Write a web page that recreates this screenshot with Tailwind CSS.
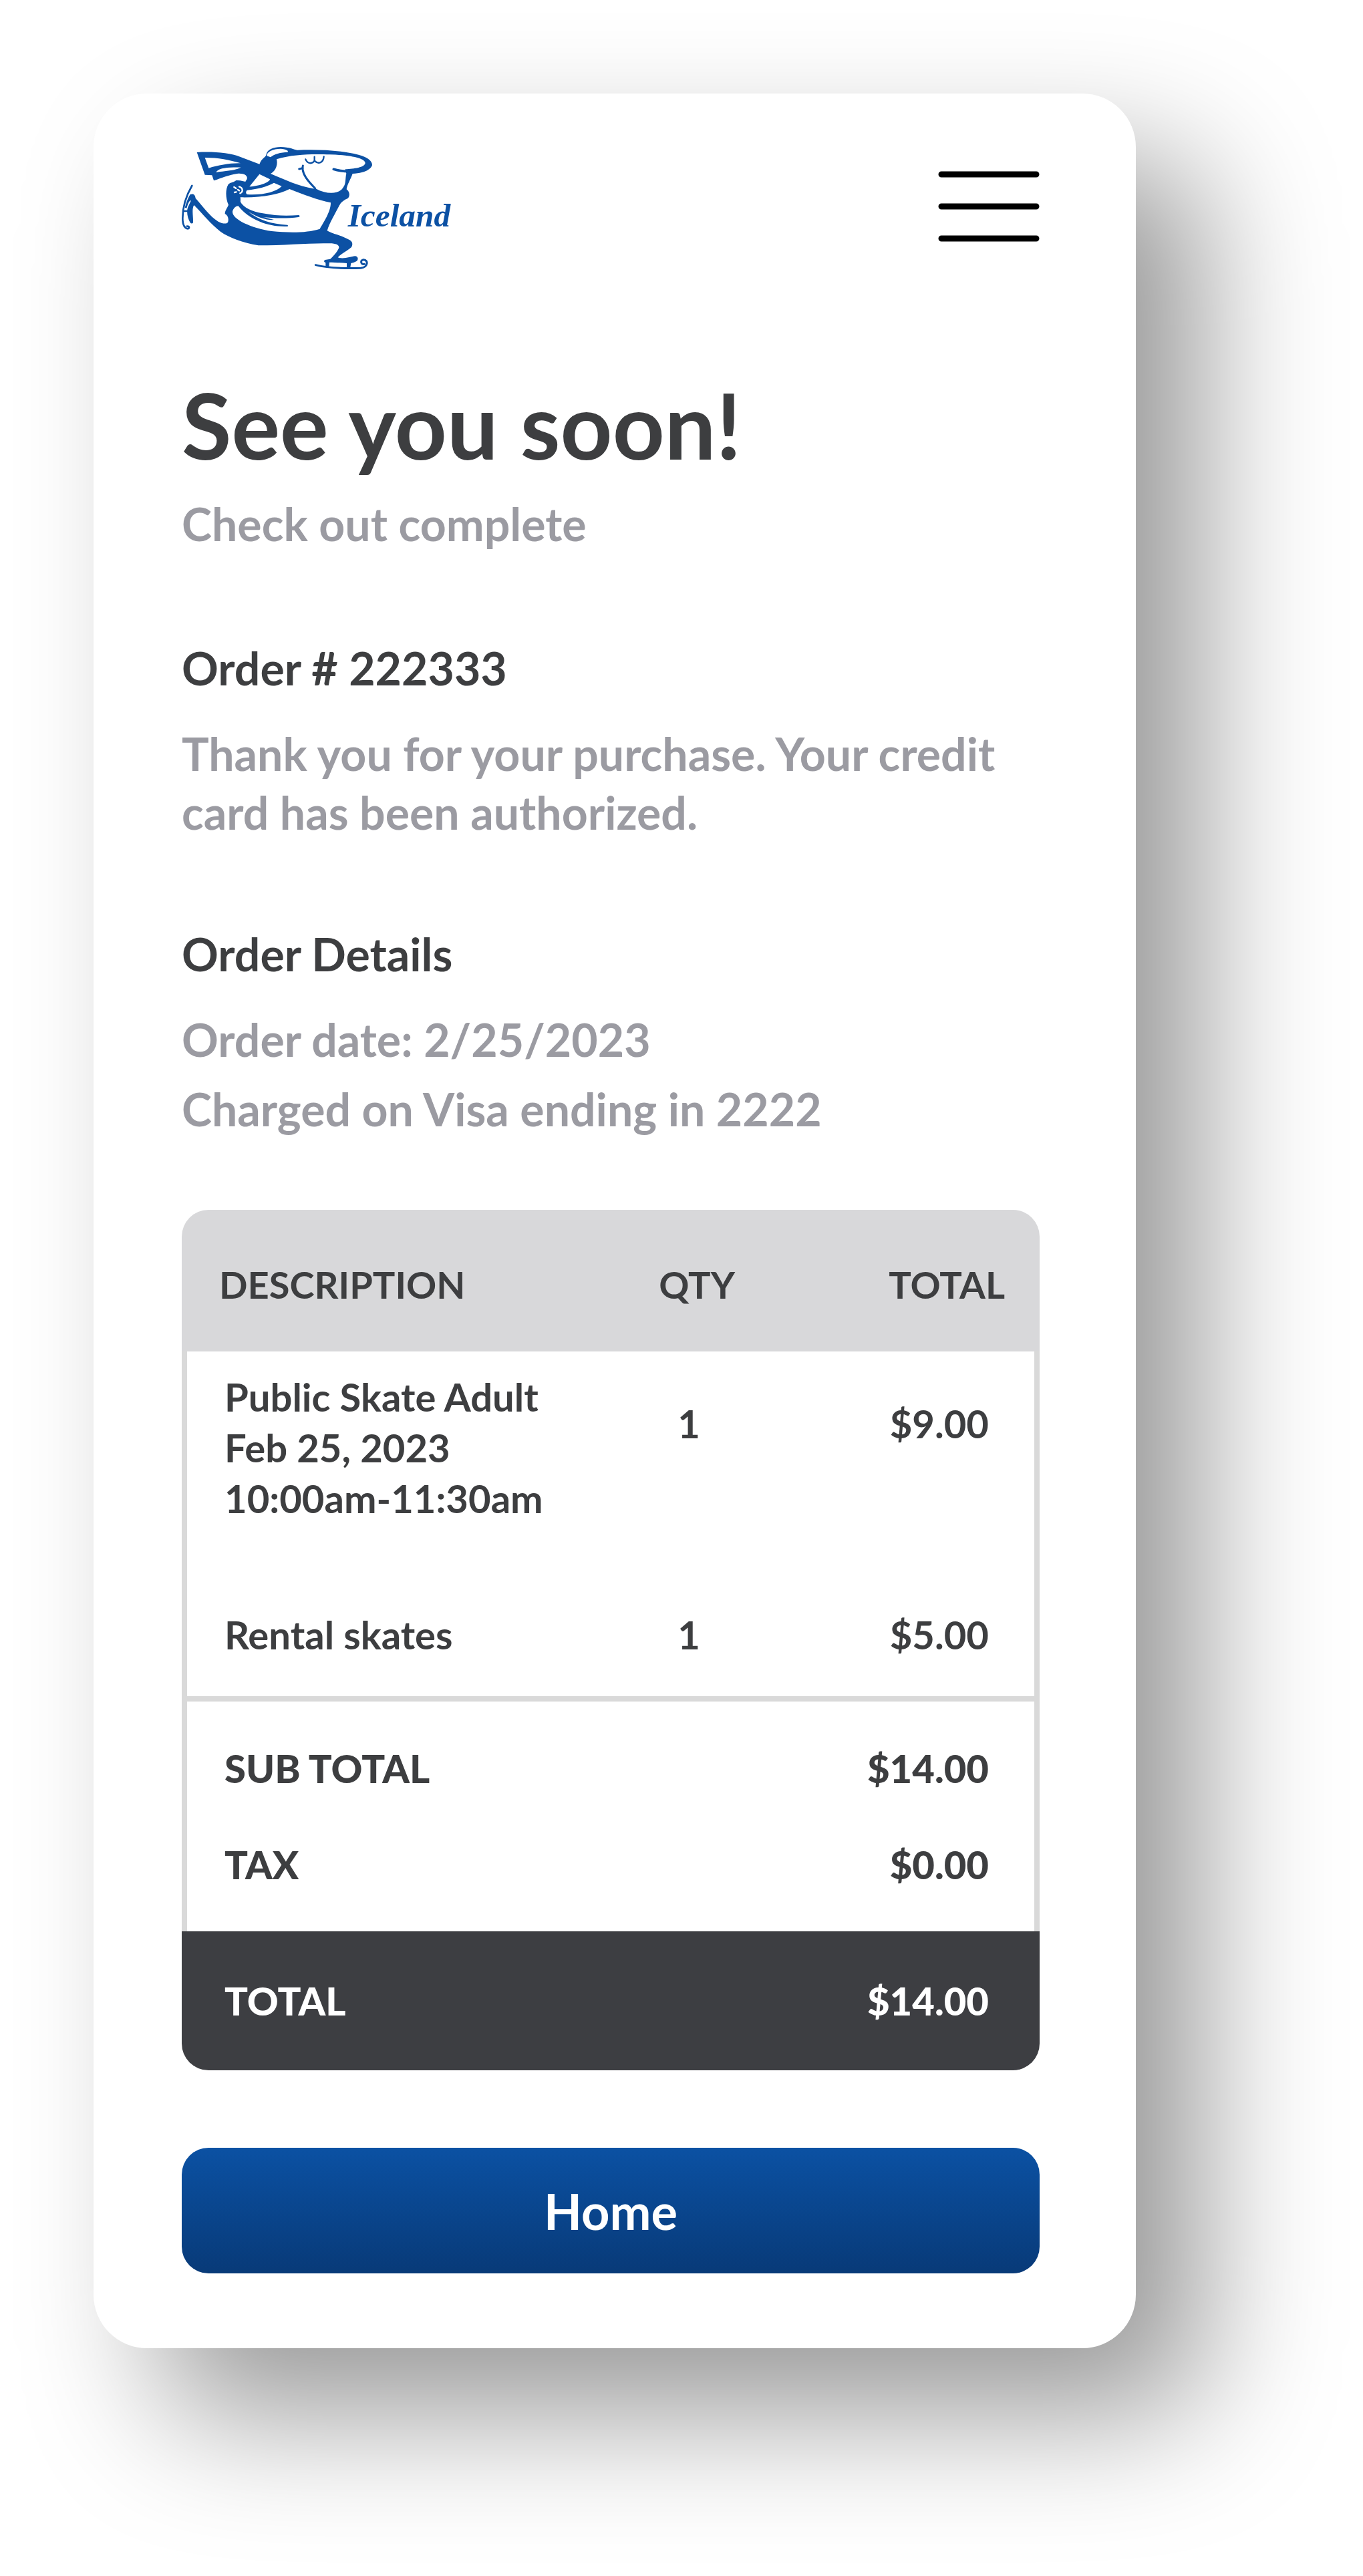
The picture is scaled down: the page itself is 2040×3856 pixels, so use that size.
<!doctype html>
<html lang="en">

  <head>
    <meta charset="utf-8">
    <meta name="viewport" content="width=device-width, initial-scale=1">
    <title>Iceland - Order complete</title>
    <script src="https://cdn.jsdelivr.net/npm/@tailwindcss/browser@4"></script>
  </head>

  <body class="bg-white font-['Lato','Open_Sans',sans-serif] font-bold text-[#3d3e40]">
    <div class="pt-[140px] pl-[140px] pr-[340px] pb-[340px] overflow-hidden">
      <main class="bg-white rounded-[80px] pt-20 pl-[132px] pr-36 pb-28 shadow-[100px_100px_200px_rgba(0,0,0,0.4)]">

        <header class="flex items-start justify-between">
          <a href="#" aria-label="Iceland">
            <svg class="w-[408px] h-[184px]" viewBox="36 60 1224 552" fill="#0c51a4">
              <!-- scarf -->
              <path d="M104 84C180 80 250 86 300 105L385 137L440 180L385 184L340 234L322 214C342 194 320 176 285 180C250 184 215 200 180 211L172 187L140 185Z"/>
              <!-- cap, body and legs -->
              <path d="M385 137C396 108 412 108 415 95C420 70 450 60 480 60C520 60 540 72 555 74C650 70 750 75 830 95C880 108 895 130 890 145C880 165 850 178 803 180C795 205 780 225 776 250C792 262 792 282 780 292C765 298 750 310 744 322C725 360 700 400 689 436C710 450 750 455 790 478C803 485 805 498 798 510C775 530 750 540 737 556C760 566 795 552 815 550C828 552 830 564 822 572C812 578 803 580 796 582L793 600H777V582C750 580 720 578 699 578L697 600H682V580C675 577 672 572 680 567L703 563C720 548 738 525 742 512C743 500 730 493 700 493C620 490 500 502 380 502C310 490 250 468 210 440C170 410 130 360 91 321C80 340 88 370 87 400C84 405 78 405 74 400C62 380 56 350 64 330L78 300C70 300 66 310 58 335L50 332C58 305 66 285 74 273C90 268 96 275 98 290C130 325 160 370 200 395C220 405 240 408 244 396C248 380 242 366 230 360C230 345 240 335 246 320C232 290 232 250 245 228C255 218 270 220 280 210C300 208 312 215 330 216L385 170Z"/>
              <g fill="#fff">
                <path d="M140 108C200 108 250 118 300 133C250 132 200 142 157 155Z"/>
                <path d="M190 174C200 155 240 151 302 152C270 168 220 168 190 174Z"/>
                <path d="M418 100C418 80 446 69 480 68C505 70 516 76 512 83C480 84 450 92 435 106Z"/>
                <path d="M462 115C540 90 640 92 700 94C800 96 860 112 860 132C858 152 810 158 770 160L775 180C770 200 774 225 762 240C745 272 690 275 640 248L625 247C560 235 500 208 435 180C460 165 468 140 462 115Z"/>
                <path d="M385 182L432 205C430 220 380 237 340 238Z"/>
                <path d="M330 254C380 248 420 238 450 221L485 236C460 262 400 277 330 273C322 268 324 258 330 254Z"/>
                <path d="M299 286C400 288 470 274 520 249C580 272 650 300 705 310C706 350 672 400 656 428C600 446 520 446 440 438C350 425 262 385 264 350C267 335 280 325 290 325C298 318 302 305 299 286Z"/>
              </g>
              <!-- folds of the jacket -->
              <path d="M272 318L298 304C315 335 350 350 400 358C460 370 510 370 562 366C568 370 566 374 560 375C510 382 440 380 400 374L450 387C420 390 375 376 335 350C380 388 440 406 510 410C516 413 514 417 508 417C430 420 340 390 290 325Z"/>
              <g fill="none" stroke="#0c51a4" stroke-width="9" stroke-linecap="round" stroke-linejoin="round">
                <path d="M718 160C750 170 790 172 840 168" stroke-width="11"/>
                <path d="M580 144C572 180 605 215 635 246"/>
                <path d="M563 159L579 155"/>
                <path d="M592 115C600 136 622 138 632 122V104M632 122C650 140 672 130 674 103" stroke-width="7"/>
                <path d="M82 234C55 280 40 330 40 380C40 410 50 425 64 427C72 424 70 416 60 416" stroke-width="8"/>
                <path d="M46 348H66" stroke-width="8"/>
                <path d="M637 590C700 606 770 606 840 604C872 600 876 568 852 566C836 568 840 590 856 586" stroke-width="9"/>
              </g>
              <g fill="none" stroke="#fff" stroke-width="7" stroke-linecap="round">
                <path d="M294 238C312 244 312 262 298 268"/>
                <path d="M271 240L280 246M273 264L281 262M288 252L294 256"/>
              </g>
              <text x="782" y="418" font-family="'Liberation Serif', serif" font-style="italic" font-weight="700" font-size="148">Iceland</text>
            </svg>
          </a>
          <button type="button" aria-label="Menu" class="mt-9">
            <svg class="w-[152px] h-[106px]" viewBox="0 0 152 106" stroke="#000" stroke-width="9" stroke-linecap="round">
              <path d="M5 5H147M5 53H147M5 101H147"/>
            </svg>
          </button>
        </header>

        <h1 class="mt-[156px] text-[136px] leading-[152px]">See you soon!</h1>
        <p class="mt-7 text-[68px] leading-[88px] text-[#9b9ba2]">Check out complete</p>

        <section class="mt-32 text-[68px] leading-[88px]">
          <h2>Order # 222333</h2>
          <p class="mt-10 text-[#9b9ba2]">Thank you for your purchase. Your credit card has been authorized.</p>
        </section>

        <section class="mt-[124px] text-[68px] leading-[88px]">
          <h2>Order Details</h2>
          <p class="mt-10 text-[#9b9ba2]">Order date: 2/25/2023</p>
          <p class="mt-4 text-[#9b9ba2]">Charged on Visa ending in 2222</p>
        </section>

        <div class="mt-[107px] rounded-[40px] overflow-hidden">
          <table class="w-full table-fixed border-separate border-spacing-0 text-[58px] leading-[76px]">
            <colgroup>
              <col class="w-[55%]">
              <col class="w-[13%]">
              <col class="w-[32%]">
            </colgroup>
            <thead class="bg-[#d8d8da] text-[56px]">
              <tr>
                <th class="pt-[74px] pb-[62px] pl-14 text-left">DESCRIPTION</th>
                <th class="pt-[74px] pb-[62px] pl-2 text-left">QTY</th>
                <th class="pt-[74px] pb-[62px] pr-[52px] text-right">TOTAL</th>
              </tr>
            </thead>
            <tbody class="align-top">
              <tr>
                <td class="border-l-8 border-[#d9d9d9] pt-[30px] pb-[62px] pl-14">Public Skate Adult<br>Feb 25, 2023<br>10:00am-11:30am</td>
                <td class="pt-[70px] pl-9">1</td>
                <td class="border-r-8 border-[#d9d9d9] pt-[70px] pr-[68px] text-right">$9.00</td>
              </tr>
              <tr>
                <td class="border-l-8 border-b-8 border-[#d9d9d9] pt-[66px] pb-[54px] pl-14">Rental skates</td>
                <td class="border-b-8 border-[#d9d9d9] pt-[66px] pl-9">1</td>
                <td class="border-r-8 border-b-8 border-[#d9d9d9] pt-[66px] pr-[68px] text-right">$5.00</td>
              </tr>
            </tbody>
            <tbody>
              <tr>
                <th colspan="2" class="border-l-8 border-[#d9d9d9] pt-[62px] pl-14 text-left font-black">SUB TOTAL</th>
                <td class="border-r-8 border-[#d9d9d9] pt-[62px] pr-[68px] text-right font-black">$14.00</td>
              </tr>
              <tr>
                <th colspan="2" class="border-l-8 border-[#d9d9d9] pt-[68px] pb-[62px] pl-14 text-left font-black">TAX</th>
                <td class="border-r-8 border-[#d9d9d9] pt-[68px] pb-[62px] pr-[68px] text-right font-black">$0.00</td>
              </tr>
            </tbody>
            <tfoot class="bg-[#3d3e42] text-white">
              <tr>
                <th colspan="2" class="py-[66px] pl-16 text-left font-black">TOTAL</th>
                <td class="py-[66px] pr-[76px] text-right font-black">$14.00</td>
              </tr>
            </tfoot>
          </table>
        </div>

        <button type="button" class="mt-[116px] h-[188px] w-full rounded-[40px] bg-linear-to-b from-[#0b51a3] to-[#083a78] text-[74px] text-white">Home</button>
      </main>
    </div>
  </body>

</html>
